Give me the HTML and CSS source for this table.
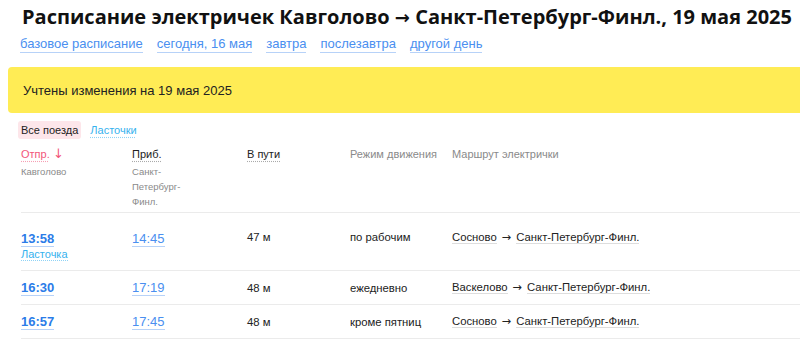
FILE: index.html
```html
<!DOCTYPE html>
<html lang="ru">
<head>
<meta charset="utf-8">
<link rel="stylesheet" href="styles.css">
</head>
<body>
<div class="page">
  <h1 class="title">Расписание электричек Кавголово <span class="arrow">→</span> Санкт-Петербург-Финл., 19 мая 2025</h1>
  <nav class="days">
    <a class="day">базовое расписание</a>
    <a class="day">сегодня, 16 мая</a>
    <a class="day">завтра</a>
    <a class="day">послезавтра</a>
    <a class="day">другой день</a>
  </nav>
  <div class="notice">Учтены изменения на 19 мая 2025</div>
  <div class="tabs">
    <span class="tab tab-active">Все поезда</span>
    <span class="tab tab-link">Ласточки</span>
  </div>
  <div class="table">
    <div class="row head">
      <div class="c c1"><span class="h h-sort">Отпр.</span> <span class="sort-arrow">↓</span><div class="sub">Кавголово</div></div>
      <div class="c c2"><span class="h h-dot">Приб.</span><div class="sub">Санкт-<br>Петербург-<br>Финл.</div></div>
      <div class="c c3"><span class="h h-dot">В пути</span></div>
      <div class="c c4"><span class="h h-gray">Режим движения</span></div>
      <div class="c c5"><span class="h h-gray">Маршрут электрички</span></div>
    </div>
    <div class="row first">
      <div class="c c1"><a class="dep">13:58</a><div><span class="lastochka">Ласточка</span></div></div>
      <div class="c c2"><a class="arr">14:45</a></div>
      <div class="c c3">47 м</div>
      <div class="c c4">по рабочим</div>
      <div class="c c5"><span class="st">Сосново</span><span class="to">→</span><span class="st">Санкт-Петербург-Финл.</span></div>
    </div>
    <div class="row">
      <div class="c c1"><a class="dep">16:30</a></div>
      <div class="c c2"><a class="arr">17:19</a></div>
      <div class="c c3">48 м</div>
      <div class="c c4">ежедневно</div>
      <div class="c c5"><span class="st">Васкелово</span><span class="to">→</span><span class="st">Санкт-Петербург-Финл.</span></div>
    </div>
    <div class="row">
      <div class="c c1"><a class="dep">16:57</a></div>
      <div class="c c2"><a class="arr">17:45</a></div>
      <div class="c c3">48 м</div>
      <div class="c c4">кроме пятниц</div>
      <div class="c c5"><span class="st">Сосново</span><span class="to">→</span><span class="st">Санкт-Петербург-Финл.</span></div>
    </div>
  </div>
</div>
</body>
</html>
```

FILE: styles.css
```css
html, body {
  margin: 0;
  padding: 0;
  background: #fff;
}
body {
  font-family: "Liberation Sans", Arial, sans-serif;
  color: #222;
  overflow: hidden;
}
.page {
  padding: 0 0 0 8px;
}
.title {
  margin: 0;
  padding: 4px 0 0 14px;
  font-family: "Open Sans", "Noto Sans", sans-serif;
  font-weight: 700;
  font-size: 20px;
  line-height: 26px;
  color: #111;
  white-space: nowrap;
  letter-spacing: 0;
}
.arrow {
  font-family: "DejaVu Sans", sans-serif;
  font-weight: 700;
  font-size: 18px;
}
.days {
  display: flex;
  gap: 14px;
  padding: 5px 0 0 12px;
  font-size: 13px;
  line-height: 16px;
}
.day {
  color: #4a8ff0;
  text-decoration: none;
  border-bottom: 1px solid #b7d2f8;
}
.notice {
  margin-top: 14px;
  height: 46px;
  background: #ffec55;
  border-radius: 4px 0 0 4px;
  padding: 0 0 0 15px;
  display: flex;
  align-items: center;
  font-size: 13px;
  color: #222;
}
.tabs {
  display: flex;
  gap: 9px;
  align-items: center;
  padding: 8px 0 0 10px;
  font-size: 11px;
  line-height: 14px;
}
.tab {
  padding: 2px 3px;
}
.tab-active {
  background: #fde6ea;
  border-radius: 3px;
  color: #222;
}
.tab-link {
  color: #36b2ee;
  padding: 2px 0;
  text-decoration: underline dotted #8fd3f6;
  text-underline-offset: 3px;
}
.table {
  margin: 7px 0 0 13px;
}
.row {
  display: flex;
  border-bottom: 1px solid #ebebeb;
  height: 33px;
  align-items: center;
  font-size: 11.3px;
  color: #222;
}
.row.head {
  height: auto;
  align-items: flex-start;
  padding-bottom: 3px;
}
.row.first {
  height: 57px;
  align-items: flex-start;
}
.row.first .c {
  padding-top: 18px;
}
.c1 { width: 111px; }
.c2 { width: 115px; }
.c3 { width: 103px; }
.c4 { width: 102px; }
.c5 { flex: 1; }
.h {
  font-size: 11px;
  line-height: 16px;
}
.h-sort {
  color: #f2567a;
  text-decoration: underline dotted #f6a0b4;
  text-underline-offset: 3px;
}
.sort-arrow {
  color: #f2567a;
  font-size: 13px;
  font-family: "DejaVu Sans", sans-serif;
  line-height: 16px;
}
.h-dot {
  color: #222;
  text-decoration: underline dotted #aaa;
  text-underline-offset: 3px;
}
.h-gray {
  color: #8a8a8a;
}
.sub {
  margin-top: 2px;
  font-size: 9.5px;
  line-height: 15px;
  color: #8a8a8a;
}
.dep {
  font-size: 13px;
  font-weight: 700;
  color: #2b7ce8;
  border-bottom: 1px solid #b7d2f8;
}
.arr {
  font-size: 13px;
  color: #4a8ff0;
  border-bottom: 1px solid #b7d2f8;
}
.lastochka {
  display: inline-block;
  margin-top: 2px;
  font-size: 11px;
  color: #36b2ee;
  border-bottom: 1px dotted #8fd3f6;
}
.st {
  border-bottom: 1px solid #ddd;
}
.to {
  font-family: "DejaVu Sans", sans-serif;
  margin: 0 5px;
}
```
